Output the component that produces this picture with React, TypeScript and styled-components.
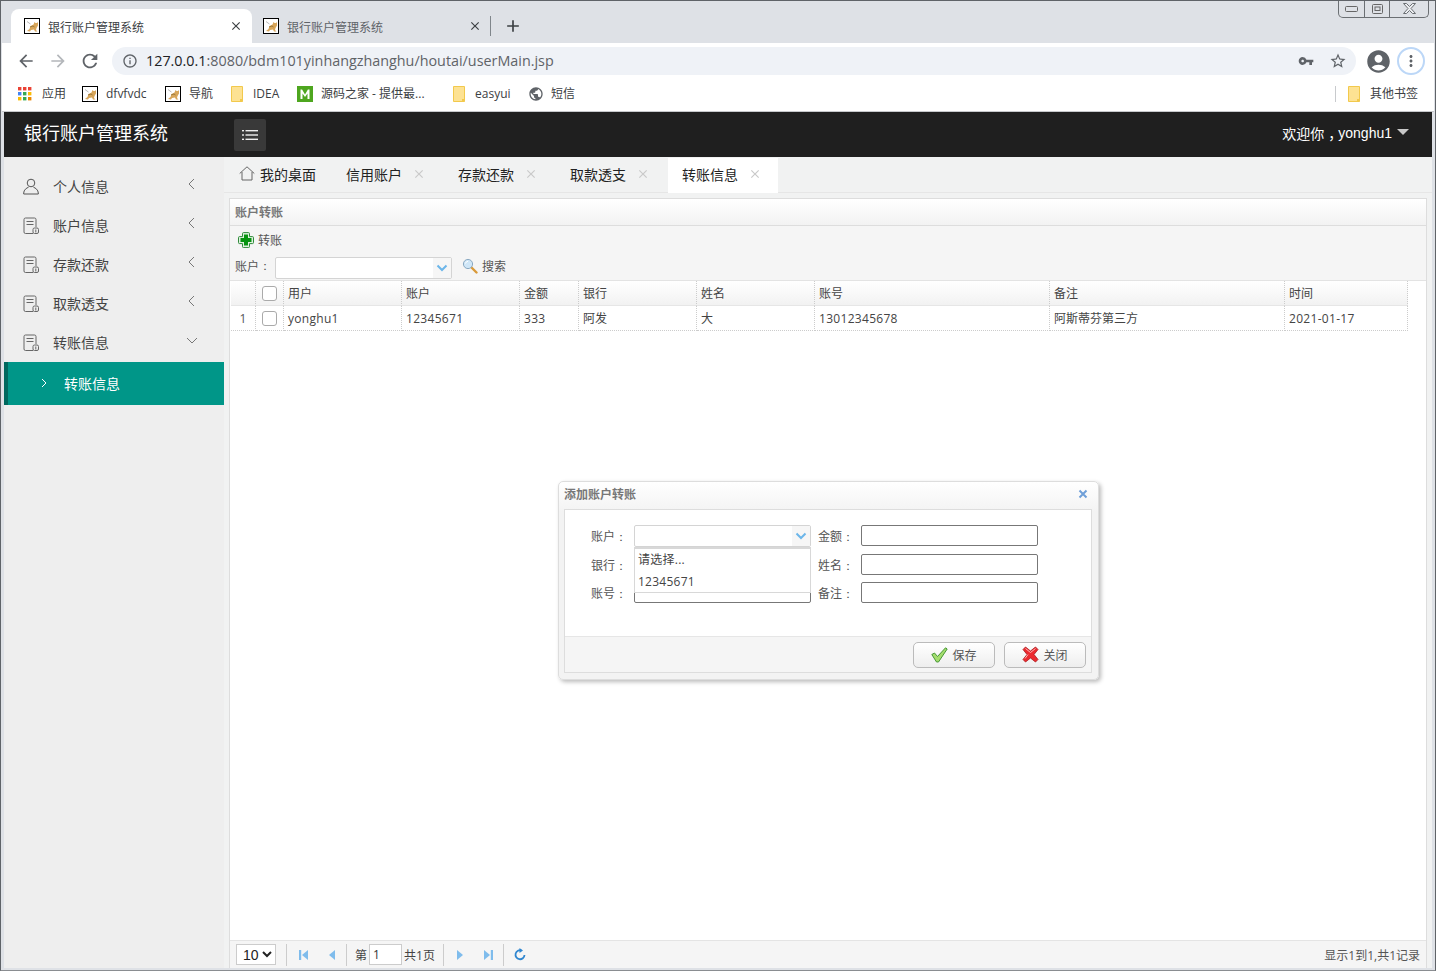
import React from "react";
import styled, { createGlobalStyle } from "styled-components";
import { MdArrowBack, MdArrowForward, MdRefresh, MdInfoOutline, MdVpnKey, MdStarBorder, MdAccountCircle, MdMoreVert, MdClose, MdAdd, MdPublic } from "react-icons/md";

const CJK = `"Open Sans", "Noto Sans CJK SC", sans-serif`;

const Global = createGlobalStyle`
  html, body { margin: 0; padding: 0; width: 1436px; height: 971px; overflow: hidden; background: #dee1e6; }
  body { font-family: ${CJK}; font-size: 12px; color: #333; }
  * { box-sizing: border-box; }
`;

const Frame = styled.div`
  position: relative; width: 1436px; height: 971px; display: flex; flex-direction: column;
  background: #dee1e6; border: 1px solid #5f6368; border-bottom-color: #8a8d91; overflow: hidden;
`;
const WindowControls = styled.div`
  position: absolute; top: -1px; right: 6px; width: 91px; height: 18px; display: flex;
  border: 1px solid #6b6f73; border-top: 0; border-radius: 0 0 5px 5px; background: #dee1e6;
`;
const WindowButton = styled.span<{ $w: number }>`
  width: ${(p) => p.$w}px; display: flex; align-items: center; justify-content: center; color: #666;
  & + & { border-left: 1px solid #6b6f73; }
`;
const TabStrip = styled.div`
  height: 42px; display: flex; align-items: flex-end; padding-left: 10px; flex: none;
`;
const BrowserTab = styled.div<{ $active?: boolean }>`
  width: 241px; height: 34px; display: flex; align-items: center; padding: 0 10px 0 13px;
  background: ${(p) => (p.$active ? "#fff" : "transparent")}; border-radius: 8px 8px 0 0;
  color: ${(p) => (p.$active ? "#3c4043" : "#5f6368")};
  ${(p) => (p.$active ? "" : "margin-left: -2px;")}
`;
const TabTitle = styled.span`
  margin: 1px 0 0 8px; flex: 1; font-size: 12px; white-space: nowrap;
`;
const TabClose = styled.span`
  display: flex; color: #3c4043; margin-right: -1px;
`;
const TabDivider = styled.span`
  width: 1px; height: 20px; background: #80868b; margin: 0 0 7px -1px; flex: none;
`;
const NewTab = styled.span`
  display: flex; color: #3c4043; margin: 0 0 7px 12px;
`;
const Toolbar = styled.div`
  height: 36px; flex: none; display: flex; align-items: center; background: #fff; margin: 0 1px; padding: 0 0 0 8px;
`;
const NavButton = styled.span<{ $c?: string }>`
  width: 32px; display: flex; justify-content: center; color: ${(p) => p.$c || "#5f6368"}; flex: none;
`;
const Omnibox = styled.div`
  width: 1244px; height: 28px; margin: 0 9px 0 6px; border-radius: 14px; background: #eff2f7;
  display: flex; align-items: center; padding: 0 0 0 10px; flex: none;
`;
const OmniIcon = styled.span<{ $ml?: number; $c?: string }>`
  display: flex; color: ${(p) => p.$c || "#5f6368"}; margin-left: ${(p) => p.$ml || 0}px;
`;
const Url = styled.span`
  margin: -2px 0 0 8px; flex: 1; font-family: "Open Sans", sans-serif; font-size: 14.35px; color: #5f6368; white-space: nowrap;
  b { font-weight: 400; color: #202124; }
`;
const MenuRing = styled.span`
  width: 28px; height: 28px; border-radius: 50%; border: 2px solid #bcd7f7; display: flex; align-items: center; justify-content: center;
  color: #5f6368; margin-left: 5px; flex: none;
`;
const Bookmarks = styled.div`
  height: 32px; flex: none; background: #fff; margin: 0 1px; padding: 0 15px 3px 16px; display: flex; align-items: center;
`;
const Bookmark = styled.span<{ $w: number; $gap?: number }>`
  width: ${(p) => p.$w}px; flex: none; display: flex; align-items: center; gap: ${(p) => p.$gap || 8}px; color: #3c4043; font-size: 12px; white-space: nowrap;
  & > span:last-child { margin-top: -1px; }
`;
const BarSpacer = styled.span`flex: 1;`;
const BarDivider = styled.span`
  width: 1px; height: 16px; background: #c8cacd; margin-right: 12px;
`;
const PageLine = styled.div`height: 1px; flex: none; background: #c6c8cb; margin: 0 1px;`;

const Page = styled.div`
  flex: 1; margin: 0 3px 2px; display: flex; flex-direction: column; min-height: 0; background: #f0f0f0;
`;
const Navbar = styled.header`
  height: 45px; flex: none; background: #1f1f1f; color: #fff; display: flex; align-items: center; padding: 0 23px 0 20px;
`;
const Brand = styled.div`
  width: 210px; font-size: 18px; font-family: "Noto Sans CJK SC", sans-serif; color: #fff; margin-top: -6px;
`;
const MenuToggle = styled.div`
  width: 32px; height: 32px; border-radius: 2px; background: #393939; display: flex; align-items: center; justify-content: center;
`;
const Welcome = styled.div`
  margin: -4px 0 0 auto; display: flex; align-items: center; font-size: 14px; color: #fff; font-family: "Liberation Sans", "Noto Sans CJK SC", sans-serif;
`;
const Comma = styled.span`
  display: inline-block; width: 14px; text-indent: 4px; letter-spacing: -4px; white-space: nowrap;
`;
const Caret = styled.span`
  width: 0; height: 0; border: 6px solid transparent; border-top: 6px solid #c8c8c8; border-bottom: 0; margin: -1px 0 0 5px;
`;
const Body = styled.div`
  flex: 1; display: flex; min-height: 0;
`;
const Sidebar = styled.nav`
  width: 220px; flex: none; background: #eee; padding-top: 10px;
`;
const SideItem = styled.div`
  height: 39px; display: flex; align-items: center; padding: 0 0 0 19px; color: #444;
`;
const SideIcon = styled.span`display: flex; width: 16px; height: 18px; color: #666; align-items: center;`;
const SideLabel = styled.span`margin: -2px 0 0 14px; flex: 1; font-size: 14px; font-family: "Noto Sans CJK SC", sans-serif;`;
const SideChevron = styled.span`display: flex; margin: -5px 26px 0 0; color: #777;`;
const SideActive = styled.div`
  height: 43px; background: #009688; border-left: 4px solid #00685e; color: #fff; display: flex; align-items: center;
  padding: 0 0 1px 30px; font-size: 14px; font-family: "Noto Sans CJK SC", sans-serif;
`;
const ActiveLabel = styled.span`margin-left: 14px; margin-top: -1px;`;
const Main = styled.main`
  flex: 1; min-width: 0; display: flex; flex-direction: column; background: #f1f2f2;
`;
const PageTabs = styled.div`
  height: 36px; flex: none; display: flex; align-items: flex-end; padding-left: 6px; border-bottom: 1px solid #e6e6e6;
`;
const HomeTab = styled.div`
  width: 102px; height: 34px; display: flex; align-items: center; padding: 0 0 3px 9px; gap: 5px; font-size: 14px; color: #222; font-family: "Noto Sans CJK SC", sans-serif;
`;
const PageTab = styled.div<{ $active?: boolean }>`
  width: 112px; height: ${(p) => (p.$active ? 35 : 34)}px; margin-bottom: ${(p) => (p.$active ? -1 : 0)}px; display: flex; align-items: center; padding: 0 0 3px 14px; font-size: 14px;
  color: #222; font-family: "Noto Sans CJK SC", sans-serif; gap: 10px;
  ${(p) => (p.$active ? "background: #fff; width: 110px;" : "")}
`;
const TabX = styled.span`display: flex; color: #c9c9c9;`;
const Panel = styled.section`
  flex: 1; min-height: 0; margin: 5px 5px 0 5px; background: #fff; border: 1px solid #ddd; border-bottom: 0; display: flex; flex-direction: column;
`;
const PanelHead = styled.div`
  height: 27px; flex: none; background: linear-gradient(#fff, #f2f2f2); border-bottom: 1px solid #ddd; padding: 0 0 0 5px;
  line-height: 25px; font-size: 12px; font-weight: 700; color: #777; font-family: "Noto Sans CJK SC", sans-serif;
`;
const GridTools = styled.div`
  height: 55px; flex: none; background: #f5f5f5; border-bottom: 1px solid #e3e3e3; padding-left: 5px;
`;
const ToolRow = styled.div<{ $h: number }>`
  height: ${(p) => p.$h}px; display: flex; align-items: center; font-size: 12px; color: #555;
`;
const ToolBtn = styled.span`
  display: flex; align-items: center; gap: 4px; margin-left: 3px; color: #555;
`;
const SearchBtn = styled.span`
  display: flex; align-items: center; gap: 4px; margin-left: 10px; color: #555;
`;
const Colon = styled.span<{ $mr?: number }>`
  display: inline-block; width: 12px; margin-right: ${(p) => p.$mr || 0}px; text-align: center; font-family: "Liberation Sans", sans-serif;
`;
const ComboBox = styled.div<{ $w: number; $mt?: number }>`
  width: ${(p) => p.$w}px; height: 22px; margin-top: ${(p) => p.$mt || 0}px; background: #fff; border: 1px solid #d4d4d4; border-radius: 2px; display: flex; justify-content: flex-end; flex: none;
`;
const ComboArrow = styled.span`
  width: 18px; background: #f6f6f6; display: flex; align-items: center; justify-content: center;
`;
const Table = styled.div`
  display: grid; grid-template-columns: 25px 28px 118px 118px 59px 118px 118px 235px 235px 123px; width: 1177px; margin-left: 1px; font-size: 12px; color: #444;
`;
const Row = styled.div<{ $head?: boolean }>`
  display: contents;
  & > * {
    height: 25px;
    background: ${(p) => (p.$head ? "linear-gradient(#fff, #f2f2f2)" : "#fff")};
    border-bottom: ${(p) => (p.$head ? "1px solid #e6e6e6" : "1px dotted #ccc")};
  }
`;
const Cell = styled.div<{ $latin?: boolean }>`
  border-right: 1px dotted #ccc; display: flex; align-items: center; padding-left: 4px; overflow: hidden; white-space: nowrap;
  ${(p) => (p.$latin ? "letter-spacing: .3px;" : "")}
`;
const NumCell = styled(Cell)`
  padding: 0; justify-content: center; color: #555;
`;
const Tick = styled.input.attrs({ type: "checkbox" })`
  appearance: none; margin: 0; width: 15px; height: 15px; border: 1px solid #aaa; border-radius: 3px; background: #fff;
`;
const Empty = styled.div`flex: 1; background: #fff;`;
const Pager = styled.div`
  height: 28px; flex: none; background: #f5f5f5; border-top: 1px solid #e4e4e4; display: flex; align-items: center; padding: 0 6px 0 6px; color: #444; font-size: 12px;
`;
const PageSelect = styled.select`
  width: 40px; height: 21px; border: 1px solid #ccc; background: #fff; font-family: "Liberation Sans", sans-serif; font-size: 14px; color: #222; padding: 0 0 0 2px; border-radius: 0;
`;
const PagerSep = styled.span<{ $ml: number; $mr: number }>`
  width: 1px; height: 22px; background: #ccc; margin: 0 ${(p) => p.$mr}px 0 ${(p) => p.$ml}px; flex: none;
`;
const PagerBtn = styled.span<{ $w?: number }>`
  width: ${(p) => p.$w || 28}px; display: flex; justify-content: center; flex: none;
`;
const PagerInput = styled.input`
  width: 33px; height: 21px; border: 1px solid #ccc; margin: 0 2px 0 2px; font-size: 12px; padding: 0 3px; font-family: ${CJK}; color: #333;
`;
const PagerInfo = styled.span`margin-left: auto; color: #555;`;

const Dialog = styled.div`
  position: absolute; left: 557px; top: 480px; width: 541px; height: 199px; background: linear-gradient(#fff 0, #f3f3f3 30px, #f3f3f3 100%);
  border: 1px solid #ddd; border-radius: 5px; box-shadow: 2px 2px 4px #bbb; padding: 0 6px 6px 5px; display: flex; flex-direction: column;
`;
const DialogHead = styled.div`
  height: 27px; flex: none; display: flex; align-items: center; justify-content: space-between; font-size: 12px; font-weight: 700; color: #777; padding: 0 4px 4px 0; font-family: "Noto Sans CJK SC", sans-serif;
`;
const DialogBody = styled.div`
  flex: 1; border: 1px solid #ddd; background: #fff; display: flex; flex-direction: column; min-height: 0;
`;
const FormGrid = styled.div`
  position: relative; flex: 1; display: grid; grid-template-columns: 62px 177px 36px 177px; column-gap: 7px; grid-auto-rows: 21px; row-gap: 7.5px;
  padding: 15px 0 0 0; align-content: start;
`;
const Label = styled.label<{ $left?: boolean }>`
  text-align: ${(p) => (p.$left ? "left" : "right")}; line-height: 23px; font-size: 12px; color: #555; white-space: nowrap;
`;
const TextBox = styled.input`
  height: 21px; width: 177px; border: 1px solid #777; border-radius: 2px; background: #fff; padding: 0;
`;
const DropMenu = styled.div`
  position: absolute; left: 69px; top: 37px; width: 177px; height: 46px; background: #fff; border: 1px solid #d8d8d8; border-top: 2px solid #d8d8d8; z-index: 2;
  font-size: 12px; color: #444;
`;
const DropItem = styled.div`height: 22px; line-height: 22px; padding-left: 3px; letter-spacing: .25px;`;
const DialogFoot = styled.div`
  height: 36px; flex: none; background: #f5f5f5; border-top: 1px solid #e6e6e6; display: flex; justify-content: flex-end; align-items: center; gap: 9px; padding-right: 5px;
`;
const DlgButton = styled.button`
  width: 82px; height: 26px; border: 1px solid #bbb; border-radius: 5px; background: linear-gradient(#fff, #eee); display: flex; align-items: center; justify-content: center; gap: 4px;
  font-size: 12px; color: #555; font-family: ${CJK}; padding: 0;
`;

const Favicon = () => (
  <svg width="16" height="16" viewBox="0 0 16 16">
    <rect x=".5" y=".5" width="15" height="15" fill="#fff" stroke="#000" />
    <path d="M3 3.500l2 1.500 1.500 1" stroke="#b9b9b9" fill="none" />
    <path d="M3 13l2.500-2 1-3 3-1.500 1-2.500 1 1h1.500l1-1v3.500l-1.500 2.500-.5 2 1.500 1.500h-2.500l-1-2-3 .5-1 1.500z" fill="#d8a65a" />
    <path d="M6 9l3-1 1.500 1" stroke="#9c7a3c" fill="none" />
  </svg>
);
const Folder = () => (
  <svg width="12" height="16" viewBox="0 0 12 16">
    <path d="M.5.5h11v15H.5z" fill="#fde293" stroke="#f2c94c" />
    <path d="M9 13h2.500v2.500H9z" fill="#f2c94c" />
  </svg>
);
const AppsGrid = () => (
  <svg width="14" height="14" viewBox="0 0 14 14">
    {[["#ea4335", "#ea4335", "#ea4335"], ["#4285f4", "#34a853", "#fbbc04"], ["#fbbc04", "#34a853", "#ea8600"]].flatMap((r, y) =>
      r.map((c, x) => <rect key={`${x}${y}`} x={x * 5} y={y * 5} width="3.400" height="3.400" fill={c} />)
    )}
  </svg>
);
const MLogo = () => (
  <svg width="16" height="16" viewBox="0 0 16 16">
    <rect width="16" height="16" fill="#4ea61f" />
    <path d="M3.500 13V3.500h1.600L8 8.500l2.900-5h1.600V13h-2V7.500L8 11 5.500 7.500V13z" fill="#fff" />
  </svg>
);
const UserGlyph = () => (
  <svg width="16" height="17" viewBox="0 0 16 17" fill="none" stroke="#555" strokeWidth="1">
    <circle cx="8" cy="5" r="3.800" />
    <path d="M.7 16v-1c0-3 3-5.300 4.800-5.700M15.300 16v-1c0-3-3-5.300-4.800-5.700M.7 16h14.600" />
  </svg>
);
const DocGlyph = () => (
  <svg width="16" height="18" viewBox="0 0 16 18" fill="none" stroke="#666" strokeWidth="1">
    <path d="M10 16.500H2.500a1.500 1.500 0 0 1-1.500-1.500V2.500A1.500 1.500 0 0 1 2.500 1h9A1.500 1.500 0 0 1 13 2.500V10" />
    <path d="M3.500 4.500h7M3.500 7.500h7" />
    <rect x="10" y="11" width="5.500" height="5.500" rx="1.500" />
    <path d="M12.800 12.500v3" />
  </svg>
);
const Chevron = ({ dir }: { dir: "left" | "down" | "right" }) => (
  <svg width="12" height="12" viewBox="0 0 12 12" fill="none" stroke="currentColor" strokeWidth="1">
    <path d={dir === "left" ? "M8 1L3 6l5 5" : dir === "down" ? "M1 4l5 5 5-5" : "M4 2l4 4-4 4"} />
  </svg>
);
const HomeGlyph = () => (
  <svg width="16" height="15" viewBox="0 0 16 15" fill="none" stroke="#666" strokeWidth="1">
    <path d="M.7 7.500L8 .8l7.300 6.700M3 6v8h10V6" />
  </svg>
);
const ListGlyph = () => (
  <svg width="16" height="12" viewBox="0 0 16 12" fill="#eee">
    <rect x="0" y="1" width="2" height="1.400" /><rect x="3.500" y="1" width="12.500" height="1.400" />
    <rect x="0" y="5.300" width="2" height="1.400" /><rect x="3.500" y="5.300" width="12.500" height="1.400" />
    <rect x="0" y="9.600" width="2" height="1.400" /><rect x="3.500" y="9.600" width="12.500" height="1.400" />
  </svg>
);
const PlusGlyph = () => (
  <svg width="16" height="16" viewBox="0 0 16 16">
    <path d="M5.500.6h5a1 1 0 0 1 1 1v3h3a1 1 0 0 1 1 1v5a1 1 0 0 1-1 1h-3v3a1 1 0 0 1-1 1h-5a1 1 0 0 1-1-1v-3h-3a1 1 0 0 1-1-1v-5a1 1 0 0 1 1-1h3v-3a1 1 0 0 1 1-1z" fill="#dff0df" stroke="#2e8b3a" />
    <path d="M6 2.500h4v3.500h3.500v4H10v3.500H6V10H2.500V6H6z" fill="#069410" />
  </svg>
);
const SearchGlyph = () => (
  <svg width="16" height="16" viewBox="0 0 16 16">
    <path d="M9.500 9.500L14.500 14.500" stroke="#d99a3a" strokeWidth="2.400" strokeLinecap="round" />
    <circle cx="6" cy="6" r="4.600" fill="#cfe6f7" stroke="#8aa9c2" />
    <path d="M3.500 5.500A2.800 2.800 0 0 1 6 3.300" stroke="#fff" fill="none" />
  </svg>
);
const ComboChevron = () => (
  <svg width="12" height="8" viewBox="0 0 12 8" fill="none" stroke="#6cb6ea" strokeWidth="2">
    <path d="M1.500 1.500L6 6l4.500-4.500" />
  </svg>
);
const DialogCross = () => (
  <svg width="10" height="10" viewBox="0 0 10 10" fill="none" stroke="#6f9fd8" strokeWidth="2">
    <path d="M1.500 1.500l7 7M8.500 1.500l-7 7" />
  </svg>
);
const WindowCross = () => (
  <svg width="15" height="11" viewBox="0 0 15 11" fill="#eceef1" stroke="#6b6f73">
    <path d="M1.500.5h3l3 3 3-3h3l-4.500 5 4.500 5h-3l-3-3-3 3h-3l4.500-5z" />
  </svg>
);
const OkGlyph = () => (
  <svg width="17" height="16" viewBox="0 0 17 16">
    <path d="M.8 7.500L3.500 6l3 3.500L14.500.8l1.700 1.200L7.500 15H5.500z" fill="#a4dd6e" stroke="#3a8f2a" strokeWidth=".9" />
  </svg>
);
const CancelGlyph = () => (
  <svg width="17" height="17" viewBox="0 0 17 17">
    <path d="M1 3.500L3.500 1l5 4 5-4L16 3.500l-4 5 4 5-2.500 2.500-5-4-5 4L1 13.500l4-5z" fill="#ec2a2f" stroke="#a8161b" strokeWidth=".8" />
    <path d="M3.500 2.500l5 4 5-4M6 8.500l-3 4" stroke="#ffb3b3" fill="none" />
  </svg>
);
const PagerIcon = ({ kind }: { kind: "first" | "prev" | "next" | "last" }) => (
  <svg width="10" height="12" viewBox="0 0 10 12" fill="#7fbcec">
    {kind === "first" && <><rect x="0" y="1" width="2.200" height="10" /><path d="M9 1v10L3 6z" /></>}
    {kind === "prev" && <path d="M8 1v10L2 6z" />}
    {kind === "next" && <path d="M2 1v10l6-5z" />}
    {kind === "last" && <><rect x="7.800" y="1" width="2.200" height="10" /><path d="M1 1v10l6-5z" /></>}
  </svg>
);
const RefreshGlyph = () => (
  <svg width="12" height="13" viewBox="0 0 12 13" fill="none" stroke="#2f86d0" strokeWidth="1.800">
    <path d="M7.500 2.500A4.500 4.500 0 1 0 10.500 7" />
    <path d="M5.500 0v5l3.500-2.500z" fill="#2f86d0" stroke="none" />
  </svg>
);

const menu = ["账户信息", "存款还款", "取款透支"];
const heads = ["用户", "账户", "金额", "银行", "姓名", "账号", "备注", "时间"];
const row = ["yonghu1", "12345671", "333", "阿发", "大", "13012345678", "阿斯蒂芬第三方", "2021-01-17"];

export default function App() {
  return (
    <Frame>
      <Global />
      <WindowControls>
        <WindowButton $w={25}><svg width="13" height="6" viewBox="0 0 13 6" fill="none" stroke="#666"><rect x=".5" y=".5" width="12" height="5" rx="1" /></svg></WindowButton>
        <WindowButton $w={25}><svg width="11" height="10" viewBox="0 0 11 10" fill="none" stroke="#666"><rect x=".5" y=".5" width="10" height="9" rx="1" /><rect x="3" y="3" width="5" height="3.500" /></svg></WindowButton>
        <WindowButton $w={39}><WindowCross /></WindowButton>
      </WindowControls>
      <TabStrip>
        <BrowserTab $active><Favicon /><TabTitle>银行账户管理系统</TabTitle><TabClose><MdClose size={14} /></TabClose></BrowserTab>
        <BrowserTab><Favicon /><TabTitle>银行账户管理系统</TabTitle><TabClose><MdClose size={14} /></TabClose></BrowserTab>
        <TabDivider />
        <NewTab><MdAdd size={20} /></NewTab>
      </TabStrip>
      <Toolbar>
        <NavButton><MdArrowBack size={20} /></NavButton>
        <NavButton $c="#b4b7bb"><MdArrowForward size={20} /></NavButton>
        <NavButton><MdRefresh size={22} /></NavButton>
        <Omnibox>
          <OmniIcon><MdInfoOutline size={16} /></OmniIcon>
          <Url><b>127.0.0.1</b>:8080/bdm101yinhangzhanghu/houtai/userMain.jsp</Url>
          <OmniIcon><MdVpnKey size={16} /></OmniIcon>
          <OmniIcon $ml={15} $c="#5f6368"><MdStarBorder size={18} /></OmniIcon>
          <OmniIcon $ml={9} />
        </Omnibox>
        <OmniIcon $ml={0}><MdAccountCircle size={27} /></OmniIcon>
        <MenuRing><MdMoreVert size={18} /></MenuRing>
      </Toolbar>
      <Bookmarks>
        <Bookmark $w={64} $gap={10}><AppsGrid /><span>应用</span></Bookmark>
        <Bookmark $w={83}><Favicon /><span>dfvfvdc</span></Bookmark>
        <Bookmark $w={66}><Favicon /><span>导航</span></Bookmark>
        <Bookmark $w={66} $gap={10}><Folder /><span>IDEA</span></Bookmark>
        <Bookmark $w={156}><MLogo /><span>源码之家 - 提供最...</span></Bookmark>
        <Bookmark $w={75} $gap={10}><Folder /><span>easyui</span></Bookmark>
        <Bookmark $w={60} $gap={7}><OmniIcon><MdPublic size={16} /></OmniIcon><span>短信</span></Bookmark>
        <BarSpacer />
        <BarDivider />
        <Bookmark $w={71} $gap={10}><Folder /><span>其他书签</span></Bookmark>
      </Bookmarks>
      <PageLine />
      <Page>
        <Navbar>
          <Brand>银行账户管理系统</Brand>
          <MenuToggle><ListGlyph /></MenuToggle>
          <Welcome>欢迎你<Comma>，</Comma>yonghu1<Caret /></Welcome>
        </Navbar>
        <Body>
          <Sidebar>
            <SideItem><SideIcon><UserGlyph /></SideIcon><SideLabel>个人信息</SideLabel><SideChevron><Chevron dir="left" /></SideChevron></SideItem>
            {menu.map((m) => (
              <SideItem key={m}><SideIcon><DocGlyph /></SideIcon><SideLabel>{m}</SideLabel><SideChevron><Chevron dir="left" /></SideChevron></SideItem>
            ))}
            <SideItem><SideIcon><DocGlyph /></SideIcon><SideLabel>转账信息</SideLabel><SideChevron><Chevron dir="down" /></SideChevron></SideItem>
            <SideActive><Chevron dir="right" /><ActiveLabel>转账信息</ActiveLabel></SideActive>
          </Sidebar>
          <Main>
            <PageTabs>
              <HomeTab><HomeGlyph />我的桌面</HomeTab>
              {["信用账户", "存款还款", "取款透支"].map((t) => (
                <PageTab key={t}>{t}<TabX><MdClose size={14} /></TabX></PageTab>
              ))}
              <PageTab $active>转账信息<TabX><MdClose size={14} /></TabX></PageTab>
            </PageTabs>
            <Panel>
              <PanelHead>账户转账</PanelHead>
              <GridTools>
                <ToolRow $h={28}><ToolBtn><PlusGlyph />转账</ToolBtn></ToolRow>
                <ToolRow $h={24}>账户<Colon $mr={4}>：</Colon><ComboBox $w={177} $mt={4}><ComboArrow><ComboChevron /></ComboArrow></ComboBox><SearchBtn><SearchGlyph />搜索</SearchBtn></ToolRow>
              </GridTools>
              <Table>
                <Row $head>
                  <NumCell />
                  <NumCell><Tick readOnly /></NumCell>
                  {heads.map((h) => <Cell key={h}>{h}</Cell>)}
                </Row>
                <Row>
                  <NumCell>1</NumCell>
                  <NumCell><Tick readOnly /></NumCell>
                  {row.map((c) => <Cell key={c} $latin={/^[\x00-\x7f]+$/.test(c)}>{c}</Cell>)}
                </Row>
              </Table>
              <Empty />
              <Pager>
                <PageSelect defaultValue="10"><option>10</option></PageSelect>
                <PagerSep $ml={10} $mr={3} />
                <PagerBtn><PagerIcon kind="first" /></PagerBtn>
                <PagerBtn><PagerIcon kind="prev" /></PagerBtn>
                <PagerSep $ml={0} $mr={8} />
                第<PagerInput defaultValue="1" />共1页
                <PagerSep $ml={8} $mr={2} />
                <PagerBtn><PagerIcon kind="next" /></PagerBtn>
                <PagerBtn><PagerIcon kind="last" /></PagerBtn>
                <PagerSep $ml={1} $mr={2} />
                <PagerBtn><RefreshGlyph /></PagerBtn>
                <PagerInfo>显示1到1,共1记录</PagerInfo>
              </Pager>
            </Panel>
          </Main>
        </Body>
      </Page>
      <Dialog>
        <DialogHead>添加账户转账<DialogCross /></DialogHead>
        <DialogBody>
          <FormGrid>
            <Label>账户<Colon>：</Colon></Label><ComboBox $w={177}><ComboArrow><ComboChevron /></ComboArrow></ComboBox>
            <Label $left>金额<Colon>：</Colon></Label><TextBox />
            <Label>银行<Colon>：</Colon></Label><TextBox />
            <Label $left>姓名<Colon>：</Colon></Label><TextBox />
            <Label>账号<Colon>：</Colon></Label><TextBox />
            <Label $left>备注<Colon>：</Colon></Label><TextBox />
            <DropMenu>
              <DropItem>请选择...</DropItem>
              <DropItem>12345671</DropItem>
            </DropMenu>
          </FormGrid>
          <DialogFoot>
            <DlgButton><OkGlyph />保存</DlgButton>
            <DlgButton><CancelGlyph />关闭</DlgButton>
          </DialogFoot>
        </DialogBody>
      </Dialog>
    </Frame>
  );
}
